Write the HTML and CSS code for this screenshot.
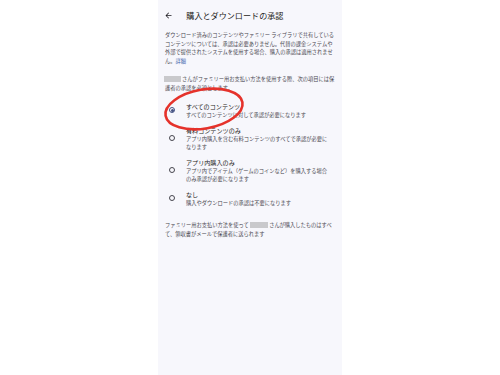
FILE: index.html
```html
<!DOCTYPE html>
<html lang="ja">
<head>
<meta charset="utf-8">
<title>購入とダウンロードの承認</title>
<link rel="stylesheet" href="styles.css">
</head>
<body>
<div class="screen">
  <header class="topbar">
    <svg class="back" viewBox="0 0 24 24"><path d="M20 11H7.83l5.59-5.59L12 4l-8 8 8 8 1.41-1.41L7.83 13H20v-2z"/></svg>
    <h1 class="title">購入とダウンロードの承認</h1>
  </header>
  <p class="para intro">ダウンロード済みのコンテンツやファミリー ライブラリで共有している<br>コンテンツについては、承認は必要ありません。代替の課金システムや<br>外部で提供されたシステムを使用する場合、購入の承認は適用されませ<br>ん。<a class="link">詳細</a></p>
  <p class="para lead"><span class="redact redact-lead"></span>さんがファミリー用お支払い方法を使用する際、次の項目には保<br>護者の承認を必須とします。</p>
  <ul class="options">
    <li class="option selected">
      <span class="radio"></span>
      <div class="option-text">
        <div class="option-title">すべてのコンテンツ</div>
        <div class="option-sub">すべてのコンテンツに対して承認が必要になります</div>
      </div>
    </li>
    <li class="option">
      <span class="radio"></span>
      <div class="option-text">
        <div class="option-title">有料コンテンツのみ</div>
        <div class="option-sub">アプリ内購入を含む有料コンテンツのすべてで承認が必要に<br>なります</div>
      </div>
    </li>
    <li class="option">
      <span class="radio"></span>
      <div class="option-text">
        <div class="option-title">アプリ内購入のみ</div>
        <div class="option-sub">アプリ内でアイテム（ゲームのコインなど）を購入する場合<br>のみ承認が必要になります</div>
      </div>
    </li>
    <li class="option">
      <span class="radio"></span>
      <div class="option-text">
        <div class="option-title">なし</div>
        <div class="option-sub">購入やダウンロードの承認は不要になります</div>
      </div>
    </li>
  </ul>
  <p class="para foot">ファミリー用お支払い方法を使って<span class="redact redact-foot"></span>さんが購入したものはすべ<br>て、領収書がメールで保護者に送られます</p>
  <svg class="annotation" viewBox="0 0 184 375"><ellipse cx="46" cy="109" rx="39" ry="19.5" transform="rotate(-10 46 109)"/></svg>
</div>
</body>
</html>
```
FILE: styles.css
```css
html, body {
  margin: 0;
  padding: 0;
  background: #ffffff;
}
body {
  display: flex;
  justify-content: center;
  font-family: "Noto Sans CJK JP", "Noto Sans", sans-serif;
}
.screen {
  position: relative;
  box-sizing: border-box;
  width: 184px;
  height: 375px;
  margin-left: 0;
  padding: 0 4px 0 7px;
  background: #f7f7fc;
  transform: translateX(0);
}
.topbar {
  display: flex;
  align-items: center;
  height: 31px;
}
.back {
  width: 9px;
  height: 9px;
  margin-left: -1.5px;
  fill: #1d1b20;
  flex: none;
}
.title {
  margin: 0 0 0 13.8px;
  font-size: 8.1px;
  font-weight: 400;
  color: #1d1b20;
  line-height: 10px;
}
.para {
  margin: 0;
  font-size: 5.25px;
  line-height: 8.5px;
  color: #4a4850;
  white-space: nowrap;
}
.intro {
  margin-top: 0;
}
.lead {
  margin-top: 10.25px;
}
.link {
  color: #3b5ba8;
}
.redact {
  display: inline-block;
  height: 6px;
  background: #c9c9cc;
  vertical-align: -0.5px;
}
.redact-lead {
  width: 17px;
  margin: 0 1px 0 -1px;
}
.redact-foot {
  width: 18px;
  margin: 0 1.2px;
}
.options {
  list-style: none;
  margin: 5.75px 0 0 0;
  padding: 0;
}
.option {
  display: flex;
  align-items: center;
  padding: 3.5px 0;
}
.radio {
  box-sizing: border-box;
  flex: none;
  width: 6px;
  height: 6px;
  margin-left: 4px;
  margin-right: 11px;
  border: 0.9px solid #47464f;
  border-radius: 50%;
  display: flex;
  align-items: center;
  justify-content: center;
}
.selected .radio {
  border-color: #445283;
}
.selected .radio::after {
  content: "";
  width: 3px;
  height: 3px;
  border-radius: 50%;
  background: #445283;
}
.option-title {
  font-size: 6.1px;
  line-height: 9px;
  color: #1d1b20;
  white-space: nowrap;
}
.option-sub {
  font-size: 5.25px;
  line-height: 8px;
  color: #4a4850;
  white-space: nowrap;
}
.foot {
  margin-top: 11px;
}
.annotation {
  position: absolute;
  left: 0;
  top: 0;
  width: 184px;
  height: 375px;
  pointer-events: none;
  fill: none;
  stroke: #e5322b;
  stroke-width: 2.6;
}
```
